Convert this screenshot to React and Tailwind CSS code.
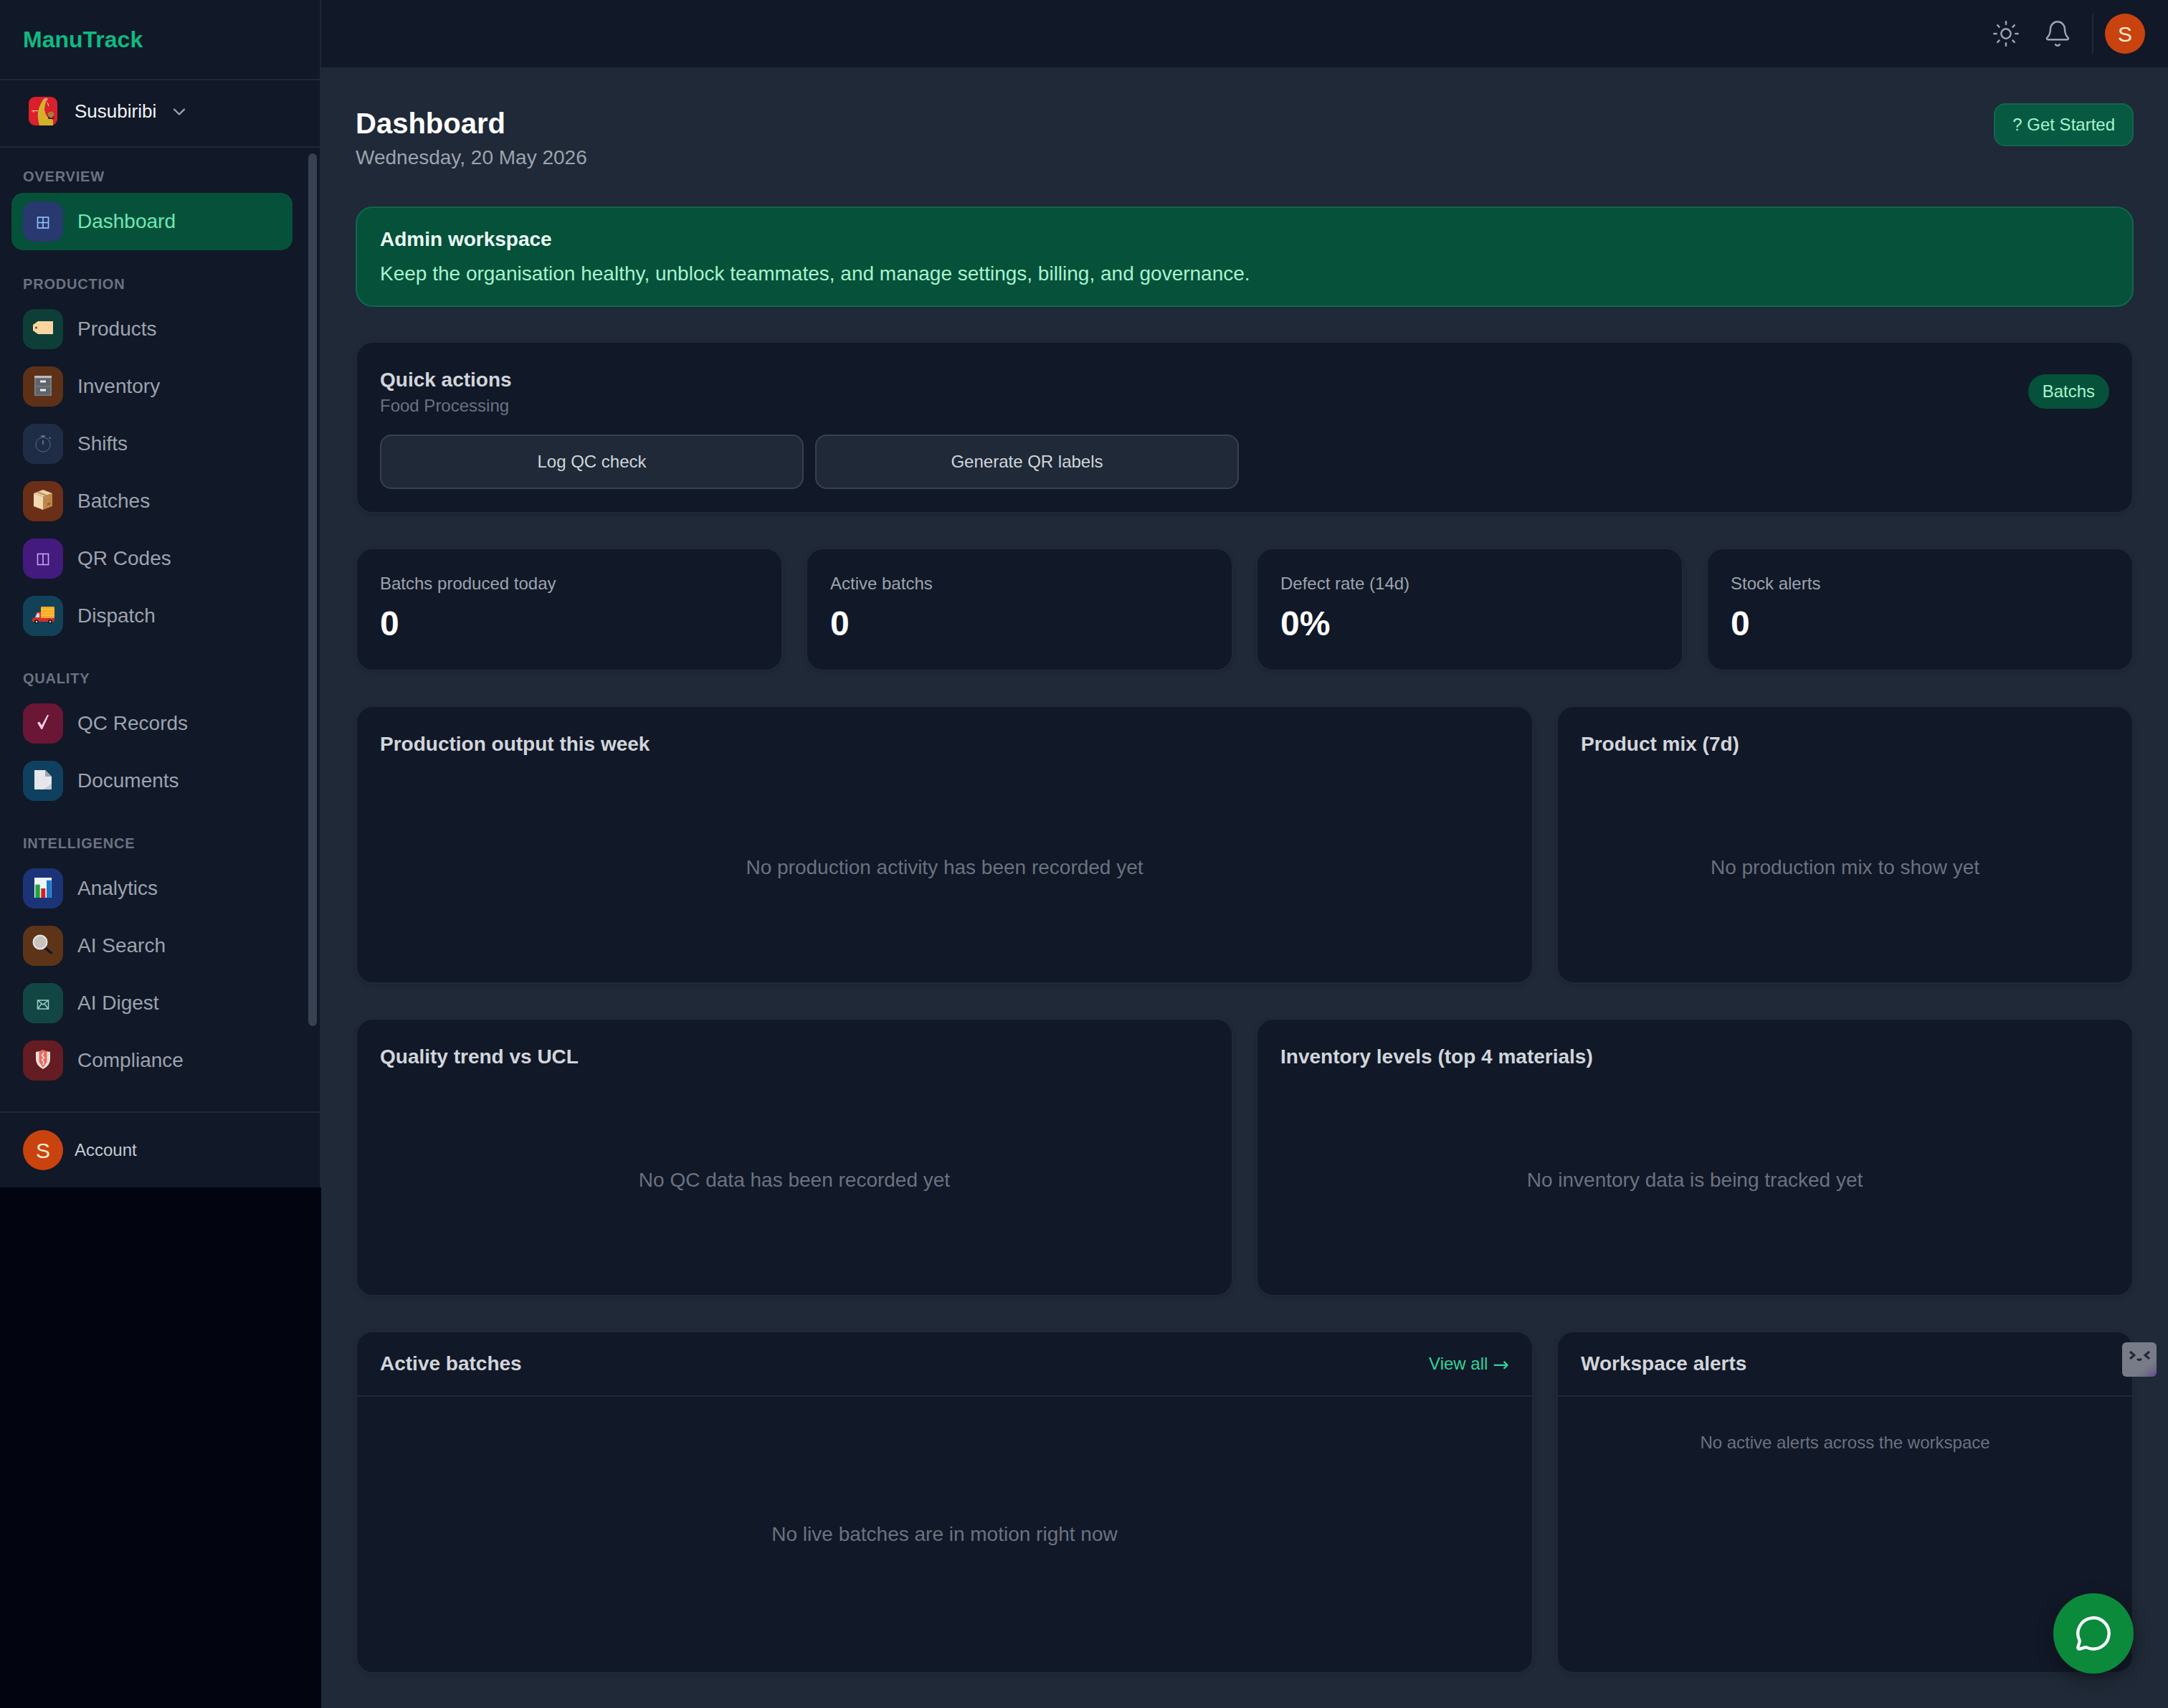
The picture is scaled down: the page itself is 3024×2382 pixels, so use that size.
import { Bell, ChevronDown, MessageCircle, Sun } from "lucide-react";

const FONT = "font-['Liberation_Sans',Arial,Helvetica,sans-serif]";

const Grid = () => (
  <g fill="none" stroke="#93c5fd" strokeWidth="1.6">
    <rect x="20.500" y="22" width="15" height="15" />
    <path d="M28 22v15M20.500 29.500h15" />
  </g>
);

const Tag = () => (
  <g>
    <path d="M21 17h21v18H21l-7-5v-8z" fill="#fbd5a0" />
    <circle cx="18.500" cy="26" r="1.500" fill="#5b4632" />
  </g>
);

const Cabinet = () => (
  <g>
    <rect x="16" y="13" width="24" height="28" fill="#777c83" />
    <rect x="16" y="13" width="24" height="3" fill="#b8bcc2" />
    <rect x="18" y="17" width="20" height="10.500" fill="#5f646b" />
    <rect x="18" y="29" width="20" height="10.500" fill="#5f646b" />
    <rect x="24" y="19.500" width="8" height="3" fill="#eceef1" />
    <rect x="24" y="31.500" width="8" height="3" fill="#eceef1" />
  </g>
);

const Stopwatch = () => (
  <g fill="none" stroke="#94a3b8">
    <circle cx="28" cy="29" r="10" strokeWidth="1" strokeDasharray="1.500 1.200" />
    <path d="M28 17v2M25 17h6M28 23v6M37 19l1.500 1.500" strokeWidth="1.100" />
  </g>
);

const Box = () => (
  <g>
    <path d="M28 12l13 5-13 5-13-5z" fill="#ecd0a4" />
    <path d="M15 17l13 5v18l-13-5z" fill="#f2d9b1" />
    <path d="M41 17l-13 5v18l13-5z" fill="#bd8649" />
    <path d="M21 14.500l13 5v5l-3 1v-5l-13-5z" fill="#b98b58" />
    <path d="M34 31l4-1.500v3l-4 1.500z" fill="#8f6232" />
  </g>
);

const Columns = () => (
  <g fill="none" stroke="#c4a5f5" strokeWidth="1.600">
    <rect x="20.500" y="21.500" width="15" height="15" />
    <path d="M28 21.500v15" />
  </g>
);

const Truck = () => (
  <g>
    <rect x="25" y="15" width="19" height="16" rx="1" fill="#f9a825" />
    <path d="M25 19h19M25 23h19M25 27h19" stroke="#ffd54f" strokeWidth="1.200" />
    <path d="M14 33l2-2 3-7q.6-1.500 2-1.500h4V33z" fill="#e53935" />
    <path d="M17.500 30l2.200-5.500h3.300V30z" fill="#b3e5fc" />
    <rect x="13" y="31" width="31" height="5" rx="1.500" fill="#d32f2f" />
    <circle cx="19" cy="36" r="3" fill="#212121" />
    <circle cx="19" cy="36" r="1.200" fill="#cfd8dc" />
    <circle cx="38" cy="36" r="3" fill="#212121" />
    <circle cx="38" cy="36" r="1.200" fill="#cfd8dc" />
  </g>
);

const Check = () => <path d="M20 27l3-1.500 3.200 5L34 16l2 .5L27 36h-1.500z" fill="#fbcfe8" />;

const Page = () => (
  <g>
    <path d="M16 13h15l9 9v18H16z" fill="#e5e7eb" />
    <path d="M31 13l9 9h-9z" fill="#9ca3af" />
    <path d="M28 40l12-8v8z" fill="#c9ccd1" />
  </g>
);

const Bars = () => (
  <g>
    <rect x="16" y="13" width="24" height="28" fill="#eef4f9" />
    <rect x="17.300" y="22.700" width="6.400" height="18.300" fill="#22a33a" />
    <rect x="25.300" y="28" width="6" height="13" fill="#d32027" />
    <rect x="33" y="16.700" width="6.700" height="24.300" fill="#1e78c8" />
  </g>
);

const Lens = () => (
  <g>
    <path d="M31.500 31.500l8 6.500" stroke="#111827" strokeWidth="3.500" strokeLinecap="round" />
    <circle cx="24" cy="23" r="9.500" fill="#c9c3bd" stroke="#e5e7eb" strokeWidth="2" />
  </g>
);

const Mail = () => (
  <g fill="none" stroke="#9fd0c8" strokeWidth="1.500">
    <rect x="20.500" y="24" width="15" height="12" />
    <path d="M20.500 24l7.500 6 7.500-6M20.500 36l5.500-7M35.500 36l-5.500-7" />
  </g>
);

const Shield = () => (
  <g>
    <path d="M18 16q5 0 10-2.700 5 2.700 10 2.700v10q0 9-10 14-10-5-10-14z" fill="#e5e0dc" />
    <path d="M22.500 15.500l5.500-2 5.500 2V30l-5.500 8-5.500-8z" fill="#ee6a5f" />
    <path d="M29 17l-2.500 4 3 3-3 3 2.500 3-1 4" fill="none" stroke="#f8f1ec" strokeWidth="1.500" />
  </g>
);

const NAV = [
  {
    label: "OVERVIEW",
    items: [{ name: "Dashboard", tile: "bg-[#27396f]", icon: <Grid />, active: true }],
  },
  {
    label: "PRODUCTION",
    items: [
      { name: "Products", tile: "bg-[#0d3f38]", icon: <Tag /> },
      { name: "Inventory", tile: "bg-[#5e3116]", icon: <Cabinet /> },
      { name: "Shifts", tile: "bg-[#1e2d45]", icon: <Stopwatch /> },
      { name: "Batches", tile: "bg-[#6b2f17]", icon: <Box /> },
      { name: "QR Codes", tile: "bg-[#431a7e]", icon: <Columns /> },
      { name: "Dispatch", tile: "bg-[#124257]", icon: <Truck /> },
    ],
  },
  {
    label: "QUALITY",
    items: [
      { name: "QC Records", tile: "bg-[#6b1635]", icon: <Check /> },
      { name: "Documents", tile: "bg-[#0f4060]", icon: <Page /> },
    ],
  },
  {
    label: "INTELLIGENCE",
    items: [
      { name: "Analytics", tile: "bg-[#1b3478]", icon: <Bars /> },
      { name: "AI Search", tile: "bg-[#5d3418]", icon: <Lens /> },
      { name: "AI Digest", tile: "bg-[#124645]", icon: <Mail /> },
      { name: "Compliance", tile: "bg-[#651c22]", icon: <Shield /> },
    ],
  },
];

function OrgLogo() {
  return (
    <svg width="40" height="40" viewBox="0 0 40 40" className="shrink-0">
      <rect width="40" height="40" rx="9" fill="#d9202c" />
      <path d="M15 40q-4-14-1-23Q17 8 21 3l4 2q-3 6-3 13 1 6 4 10l8 4v8z" fill="#d4b02c" />
      <path d="M20 4l4-3 3 2-2 3z" fill="#d8a070" />
      <path d="M26 8l2 5" stroke="#f5e6d0" strokeWidth="1" />
      <circle cx="31" cy="25" r="4.500" fill="#b5763a" />
      <path d="M26.500 26q4.500 7 9 0l-1 5h-7z" fill="#33211a" />
      <path d="M4 19.500h9M6 21h2" stroke="#f3d6b0" strokeWidth="1" />
    </svg>
  );
}

function Avatar() {
  return (
    <div className="flex h-[56px] w-[56px] shrink-0 items-center justify-center rounded-full bg-[#c9430f] text-[30px] text-[#ffedd5]">
      S
    </div>
  );
}

function NavRow({ item }) {
  return (
    <div
      className={`flex h-[80px] items-center gap-[20px] rounded-[16px] px-[16px] text-[28px] ${
        item.active ? "bg-[#055139] text-[#6ee7b7]" : "text-[#9ca3af]"
      }`}
    >
      <div className={`h-[56px] w-[56px] shrink-0 rounded-[16px] ${item.tile}`}>
        <svg width="56" height="56" viewBox="0 0 56 56">
          {item.icon}
        </svg>
      </div>
      <span>{item.name}</span>
    </div>
  );
}

function Sidebar() {
  return (
    <aside className="flex h-[1656px] w-[448px] shrink-0 flex-col border-r-2 border-[#1f2937] bg-[#111827]">
      <div className="flex h-[112px] shrink-0 items-center border-b-2 border-[#1f2937] pl-[32px] text-[32px] font-bold text-[#10b981]">
        ManuTrack
      </div>
      <div className="flex h-[94px] shrink-0 items-center gap-[24px] border-b-2 border-[#1f2937] pb-[6px] pl-[40px] text-[26px] text-[#f3f4f6]">
        <OrgLogo />
        <div className="flex items-center gap-[18px]">
          Susubiribi
          <ChevronDown size={28} className="mt-[2px] text-[#9ca3af]" />
        </div>
      </div>
      <nav className="relative flex-1 overflow-hidden pl-[16px] pr-[38px] pt-[26px]">
        <div className="flex flex-col gap-[33px]">
          {NAV.map((group) => (
            <section key={group.label}>
              <div className="mb-[9px] flex h-[28px] items-center pl-[16px] text-[20px] font-bold tracking-[0.8px] text-[#6b7280]">
                {group.label}
              </div>
              {group.items.map((item) => (
                <NavRow key={item.name} item={item} />
              ))}
            </section>
          ))}
        </div>
        <div className="absolute right-[4px] top-[8px] h-[1217px] w-[12px] rounded-full bg-[#374151]" />
      </nav>
      <div className="flex h-[106px] shrink-0 items-center gap-[16px] border-t-2 border-[#1f2937] pl-[32px] text-[24px] text-[#c5cad3]">
        <Avatar />
        Account
      </div>
    </aside>
  );
}

function Topbar() {
  return (
    <header className="flex h-[94px] shrink-0 items-center justify-end bg-[#111827] pr-[32px]">
      <Sun size={40} strokeWidth={1.5} className="text-[#9ca3af]" />
      <Bell size={40} strokeWidth={1.5} className="ml-[32px] text-[#9ca3af]" />
      <div className="ml-[28px] mr-[16px] h-[56px] w-[2px] bg-[#1f2937]" />
      <Avatar />
    </header>
  );
}

function Card({ className = "", children }) {
  return (
    <div
      className={`rounded-[24px] border-2 border-[#1f2937] bg-[#111827] shadow-[0_2px_6px_rgba(0,0,0,0.12)] ${className}`}
    >
      {children}
    </div>
  );
}

function Stat({ label, value }) {
  return (
    <Card className="h-[172px] px-[32px] pt-[28px]">
      <div className="flex h-[40px] items-center text-[24px] text-[#9ca3af]">{label}</div>
      <div className="mt-[8px] flex h-[56px] items-center text-[48px] font-bold text-white">{value}</div>
    </Card>
  );
}

function ChartCard({ title, empty }) {
  return (
    <Card className="h-[388px] px-[32px] pt-[32px]">
      <div className="flex h-[40px] items-center text-[28px] font-bold text-[#d1d5db]">{title}</div>
      <div className="mt-[12px] flex h-[280px] items-center justify-center text-[28px] text-[#6b7280]">
        {empty}
      </div>
    </Card>
  );
}

function ListCard({ title, action, children }) {
  return (
    <Card className="flex h-[478px] flex-col">
      <div className="flex h-[90px] shrink-0 items-center justify-between border-b-2 border-[#1f2937] px-[32px]">
        <span className="text-[28px] font-bold text-[#d1d5db]">{title}</span>
        {action}
      </div>
      {children}
    </Card>
  );
}

function Dashboard() {
  return (
    <div className="flex flex-col gap-[48px] px-[48px] pt-[50px]">
      <div className="flex items-start justify-between">
        <div>
          <h1 className="flex h-[56px] items-center text-[40px] font-bold text-white">Dashboard</h1>
          <p className="flex h-[40px] items-center text-[28px] text-[#9ca3af]">Wednesday, 20 May 2026</p>
        </div>
        <button className="h-[60px] rounded-[16px] border-2 border-[#12664f] bg-[#075a41] px-[24px] text-[24px] text-[#a7f3d0]">
          ? Get Started
        </button>
      </div>

      <div className="flex h-[140px] flex-col justify-center rounded-[24px] border-2 border-[#12664f] bg-[#055139] px-[32px]">
        <div className="flex h-[44px] items-center text-[28px] font-bold text-[#ecfdf5]">Admin workspace</div>
        <div className="mt-[4px] flex h-[44px] items-center text-[28px] text-[#a7f3d0]">
          Keep the organisation healthy, unblock teammates, and manage settings, billing, and governance.
        </div>
      </div>

      <Card className="h-[240px] px-[32px] pt-[32px]">
        <div className="flex items-start justify-between">
          <div>
            <div className="flex h-[40px] items-center text-[28px] font-bold text-[#d1d5db]">Quick actions</div>
            <div className="flex h-[32px] items-center text-[24px] text-[#6b7280]">Food Processing</div>
          </div>
          <span className="mt-[12px] flex h-[48px] items-center rounded-full bg-[#055139] px-[20px] text-[24px] text-[#a7f3d0]">
            Batchs
          </span>
        </div>
        <div className="mt-[24px] flex gap-[16px]">
          {["Log QC check", "Generate QR labels"].map((label) => (
            <button
              key={label}
              className="h-[76px] w-[591px] rounded-[16px] border-2 border-[#374151] bg-[#1f2937] text-[24px] text-[#d1d5db]"
            >
              {label}
            </button>
          ))}
        </div>
      </Card>

      <div className="grid grid-cols-4 gap-[32px]">
        <Stat label="Batchs produced today" value="0" />
        <Stat label="Active batchs" value="0" />
        <Stat label="Defect rate (14d)" value="0%" />
        <Stat label="Stock alerts" value="0" />
      </div>

      <div className="grid grid-cols-[1643px_805px] gap-[32px]">
        <ChartCard title="Production output this week" empty="No production activity has been recorded yet" />
        <ChartCard title="Product mix (7d)" empty="No production mix to show yet" />
      </div>

      <div className="grid grid-cols-2 gap-[32px]">
        <ChartCard title="Quality trend vs UCL" empty="No QC data has been recorded yet" />
        <ChartCard title="Inventory levels (top 4 materials)" empty="No inventory data is being tracked yet" />
      </div>

      <div className="grid grid-cols-[1643px_805px] gap-[32px]">
        <ListCard
          title="Active batches"
          action={
            <span className="flex items-center gap-[7px] text-[24px] text-[#34d399]">
              View all <span className="text-[27px] leading-none font-['DejaVu_Sans',sans-serif]">→</span>
            </span>
          }
        >
          <div className="flex flex-1 items-center justify-center text-[28px] text-[#6b7280]">
            No live batches are in motion right now
          </div>
        </ListCard>
        <ListCard title="Workspace alerts">
          <div className="mt-[46px] flex h-[36px] items-center justify-center text-[24px] text-[#6b7280]">
            No active alerts across the workspace
          </div>
        </ListCard>
      </div>
    </div>
  );
}

export default function App() {
  return (
    <div className={`relative flex h-screen w-full overflow-hidden bg-[#02040f] ${FONT}`}>
      <Sidebar />
      <main className="flex min-w-0 flex-1 flex-col overflow-hidden bg-[#1f2937]">
        <Topbar />
        <Dashboard />
      </main>

      {/* browser extension tab stuck on the right edge */}
      <div className="absolute right-[16px] top-[1872px] h-[48px] w-[48px] overflow-hidden rounded-[6px] bg-[linear-gradient(145deg,#787c88_70%,#6d6a88_85%,#6d3f9c)]">
        <svg width="48" height="48" viewBox="0 0 48 48" fill="none" stroke="#1f2937" strokeWidth="3">
          <path d="M11 13l6 5-6 5M38 13l-6 5 6 5" />
          <path d="M21 23q3 3 6 0" />
        </svg>
      </div>

      <button className="absolute right-[48px] top-[2222px] flex h-[112px] w-[112px] items-center justify-center rounded-full bg-[#0b8a3c] text-white shadow-[0_8px_24px_rgba(0,0,0,0.35)]">
        <MessageCircle size={52} strokeWidth={2} />
      </button>
    </div>
  );
}
